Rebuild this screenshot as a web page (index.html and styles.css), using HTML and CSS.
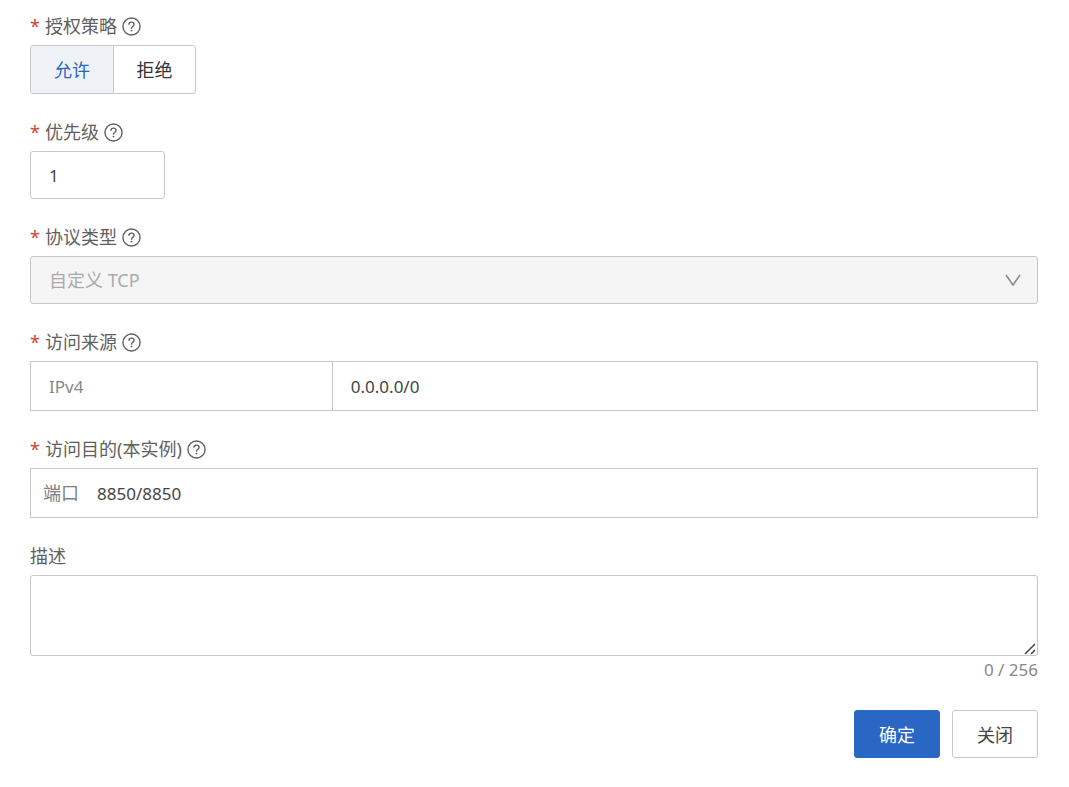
FILE: index.html
```html
<!DOCTYPE html>
<html lang="zh-CN">
<head>
    <meta charset="UTF-8">
    <meta name="viewport" content="width=device-width, initial-scale=1.0">
    <title>安全组规则</title>
    <link rel="stylesheet" href="styles.css">
</head>
<body>
    <svg class="sprite" aria-hidden="true">
        <symbol id="help" viewBox="0 0 20 20">
            <circle cx="10" cy="10" r="9" fill="none" stroke="currentColor" stroke-width="1.5"/>
            <path d="M7.3 8.2V7.8C7.3 6.4 8.4 5.4 10 5.4s2.7 1 2.7 2.3c0 1.1-.7 1.7-1.5 2.3-.8.5-1.2.9-1.2 1.9v.4" fill="none" stroke="currentColor" stroke-width="1.5"/>
            <circle cx="10" cy="14.3" r="1" fill="currentColor"/>
        </symbol>
    </svg>

    <form class="rule-form">
        <div class="field" role="radiogroup" aria-labelledby="policy-label">
            <div class="label" id="policy-label">
                <span class="required">*</span>授权策略
                <svg class="help"><use href="#help"/></svg>
            </div>
            <div class="segment">
                <label class="segment-item"><input type="radio" name="policy" value="accept" checked>允许</label>
                <label class="segment-item"><input type="radio" name="policy" value="drop">拒绝</label>
            </div>
        </div>

        <div class="field">
            <label class="label" for="priority">
                <span class="required">*</span>优先级
                <svg class="help"><use href="#help"/></svg>
            </label>
            <input class="control priority" id="priority" type="text" value="1">
        </div>

        <div class="field">
            <label class="label" for="protocol">
                <span class="required">*</span>协议类型
                <svg class="help"><use href="#help"/></svg>
            </label>
            <div class="select-box">
                <select class="control" id="protocol" disabled>
                    <option>自定义 TCP</option>
                </select>
                <svg class="arrow" viewBox="0 0 16 12"><path d="M1 1l7 10 7-10" fill="none" stroke="currentColor" stroke-width="1.5"/></svg>
            </div>
        </div>

        <div class="field">
            <label class="label" for="source">
                <span class="required">*</span>访问来源
                <svg class="help"><use href="#help"/></svg>
            </label>
            <div class="group">
                <select class="group-type" aria-label="地址类型" disabled>
                    <option>IPv4</option>
                </select>
                <input class="group-input" id="source" type="text" value="0.0.0.0/0">
            </div>
        </div>

        <div class="field">
            <label class="label" for="port">
                <span class="required">*</span>访问目的(本实例)
                <svg class="help"><use href="#help"/></svg>
            </label>
            <div class="group">
                <label class="group-prefix" for="port">端口</label>
                <input class="group-input" id="port" type="text" value="8850/8850">
            </div>
        </div>

        <div class="field">
            <label class="label" for="desc">描述</label>
            <div class="textarea-box">
                <textarea class="control textarea" id="desc" maxlength="256"></textarea>
                <svg class="grip" viewBox="0 0 12 12"><path d="M1 11L11 1M7 11l4-4" fill="none" stroke="currentColor" stroke-width="1.5"/></svg>
            </div>
            <div class="count">0 / 256</div>
        </div>

        <div class="footer">
            <button class="btn btn-primary" type="button">确定</button>
            <button class="btn" type="button">关闭</button>
        </div>
    </form>
</body>
</html>
```
FILE: styles.css
```css
* {
    box-sizing: border-box;
}
body {
    margin: 0;
    background-color: #fff;
    color: #333;
    font-family: "Noto Sans", "Noto Sans CJK SC", sans-serif;
    font-size: 18px;
    line-height: 28px;
}
input, select, textarea, button {
    margin: 0;
    font-family: inherit;
    font-size: 17px;
    color: #444;
}
.sprite {
    display: none;
}
.rule-form {
    display: flex;
    flex-direction: column;
    gap: 24px;
    padding: 12px 31px 28px 30px;
}
.label {
    display: flex;
    align-items: center;
    height: 28px;
    margin-bottom: 5px;
    color: #606060;
}
.required {
    width: 15px;
    color: #d1452f;
}
.help {
    width: 19px;
    height: 19px;
    margin-left: 5px;
}
.segment {
    display: inline-flex;
    height: 49px;
    border: 1px solid #c8c8c8;
    border-radius: 3px;
    overflow: hidden;
    vertical-align: top;
}
.segment-item {
    display: flex;
    align-items: center;
    justify-content: center;
    width: 82px;
    cursor: pointer;
}
.segment-item + .segment-item {
    border-left: 1px solid #c8c8c8;
}
.segment-item input {
    appearance: none;
    width: 0;
    height: 0;
}
.segment-item:has(input:checked) {
    background-color: #eff3f8;
    color: #2a66c4;
}
.control {
    display: block;
    width: 100%;
    height: 48px;
    padding: 0 18px;
    border: 1px solid #c8c8c8;
    border-radius: 3px;
    background-color: #fff;
    appearance: none;
}
.priority {
    width: 135px;
}
.select-box, .textarea-box {
    position: relative;
}
select:disabled {
    opacity: 1;
}
.select-box .control {
    background-color: #f5f5f5;
    color: #aaa;
    font-size: 18px;
}
.arrow {
    position: absolute;
    top: 18px;
    right: 17px;
    width: 16px;
    height: 12px;
    color: #888;
}
.group {
    display: flex;
    height: 50px;
    border: 1px solid #c8c8c8;
}
.group-type {
    width: 30%;
    padding: 0 18px;
    border: none;
    border-right: 1px solid #c8c8c8;
    background-color: #fff;
    color: #888;
    appearance: none;
}
.group-prefix {
    display: flex;
    align-items: center;
    padding-left: 12px;
    color: #808080;
}
.group-input {
    flex: 1;
    min-width: 0;
    padding: 0 18px;
    border: none;
    background-color: transparent;
}
.textarea.control {
    height: 81px;
    padding: 10px 18px;
    resize: none;
}
.grip {
    position: absolute;
    right: 2px;
    bottom: 1px;
    width: 12px;
    height: 12px;
    color: #444;
}
.count {
    color: #888;
    font-size: 17px;
    text-align: right;
}
.footer {
    display: flex;
    justify-content: flex-end;
    gap: 12px;
    padding-top: 2px;
}
.btn {
    width: 86px;
    height: 48px;
    padding: 0;
    border: 1px solid #c8c8c8;
    border-radius: 3px;
    background-color: #fff;
    font-size: 18px;
    cursor: pointer;
}
.btn-primary {
    border-color: #2a66c4;
    background-color: #2a66c4;
    color: #fff;
}
```
